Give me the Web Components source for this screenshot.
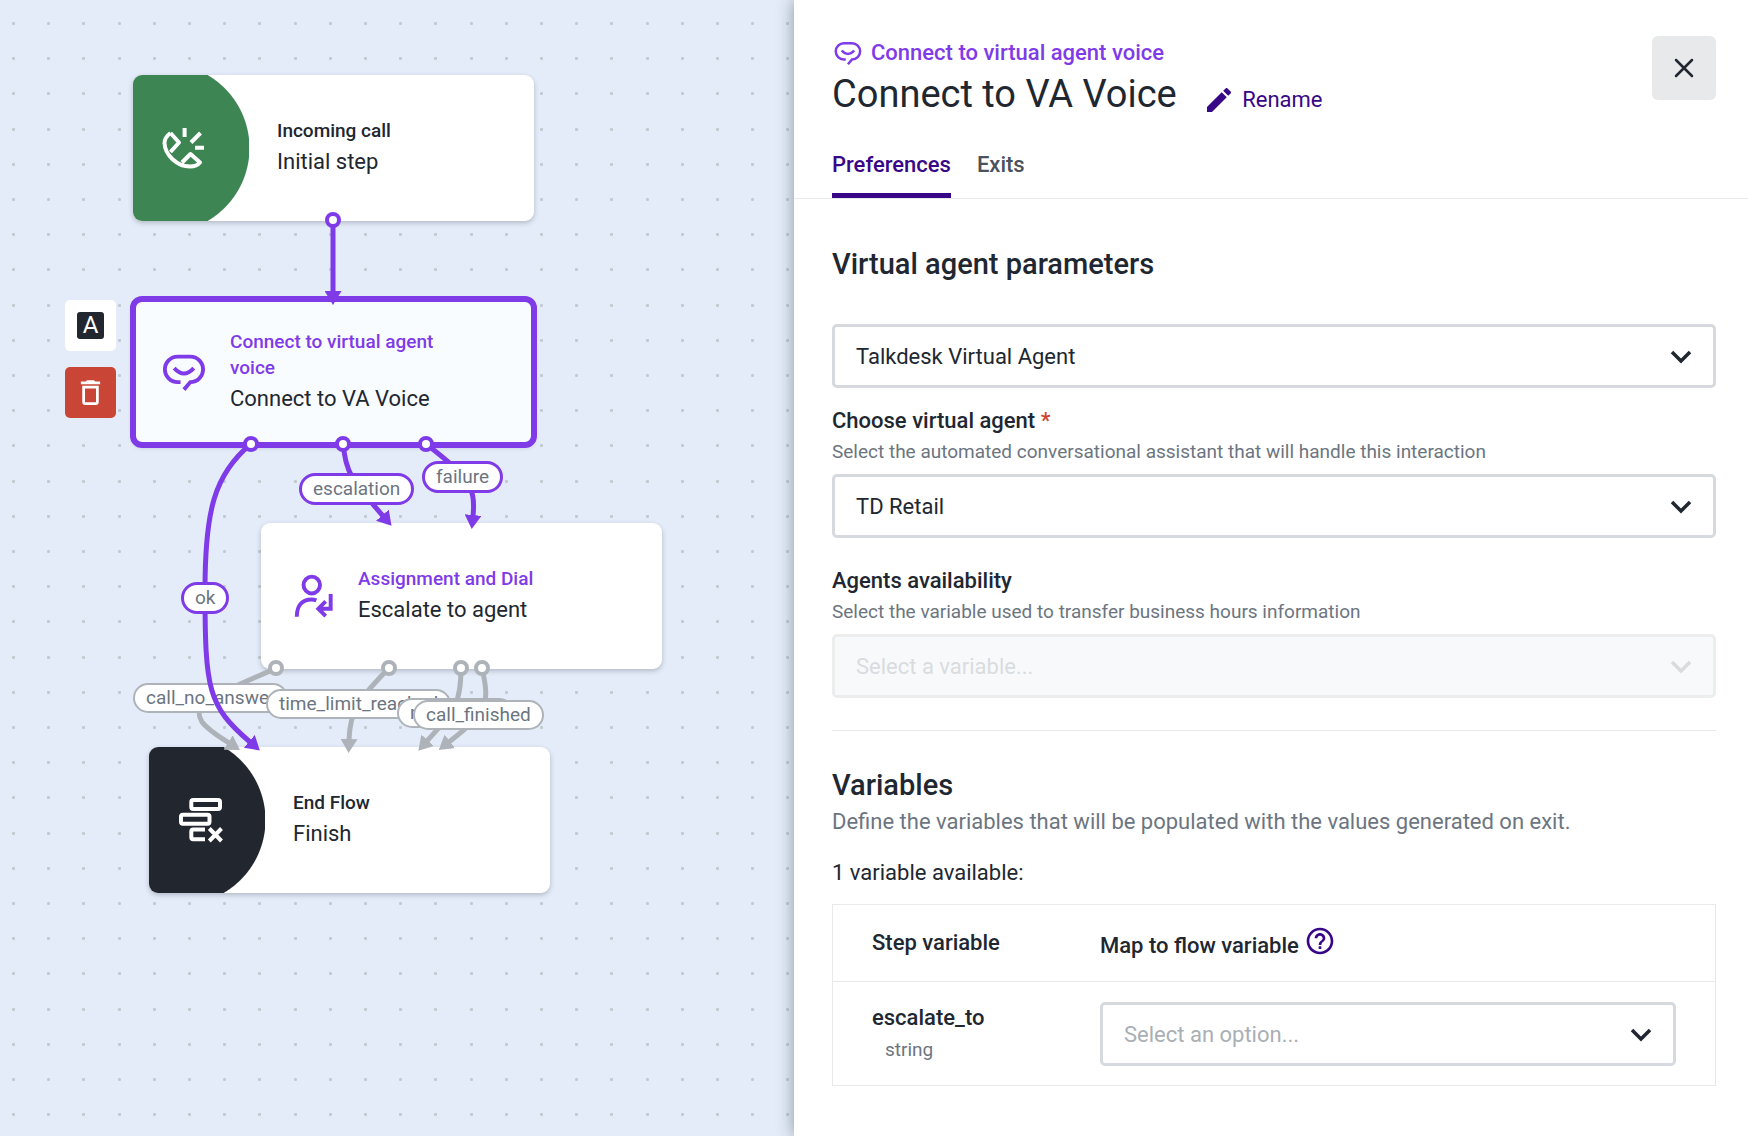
<!DOCTYPE html>
<html lang="en">
<head>
<meta charset="utf-8">
<meta name="viewport" content="width=device-width, initial-scale=1">
<title>Connect to VA Voice</title>
<style>
	body {
		margin: 0;
		font-family: Roboto, 'Open Sans', sans-serif;
		font-size: 22px;
		line-height: 32px;
		color: #212730;
		--violet: #7f3be8;
		--indigo: #380787;
		--muted: #6c757f;
		--line: #e7e9eb;
	}
</style>
</head>
<body>
<flow-editor>
	<flow-canvas slot="canvas">
		<flow-node kind="start" icon="phone" heading="Incoming call" style="left: 133px; top: 75px">Initial step</flow-node>
		<flow-node kind="selected" icon="agent" heading="Connect to virtual agent voice" style="left: 133px; top: 299px">Connect to VA Voice</flow-node>
		<flow-node kind="step" icon="assign" heading="Assignment and Dial" style="left: 261px; top: 523px">Escalate to agent</flow-node>
		<flow-node kind="end" icon="finish" heading="End Flow" style="left: 149px; top: 747px">Finish</flow-node>

		<flow-edge from="276,668" path="C262 675 248 680 236 686 C196 704 196 712 202 722 C208 730 218 736 229 743"></flow-edge>
		<flow-edge from="389,668" path="C360 698 350 708 349 740"></flow-edge>
		<flow-edge from="461,668" path="C461 704 455 710 427 741"></flow-edge>
		<flow-edge from="482,668" path="C490 704 488 712 449 742"></flow-edge>
		<flow-label style="left: 133px; top: 683px">call_no_answer</flow-label>
		<flow-label style="left: 266px; top: 689px">time_limit_reached</flow-label>
		<flow-label style="left: 397px; top: 698px">no_answer</flow-label>
		<flow-label style="left: 413px; top: 700px">call_finished</flow-label>

		<flow-edge active from="333,220" path="V292"></flow-edge>
		<flow-edge active from="251,444" path="C214 474 205 512 205 590 C205 690 208 706 250 742"></flow-edge>
		<flow-edge active from="343,444" path="C347 474 350 478 383 516"></flow-edge>
		<flow-edge active from="426,444" path="C468 476 476 486 473 516"></flow-edge>
		<flow-label active style="left: 181px; top: 582px">ok</flow-label>
		<flow-label active style="left: 299px; top: 473px">escalation</flow-label>
		<flow-label active style="left: 422px; top: 461px">failure</flow-label>

		<node-actions style="left: 65px; top: 300px"></node-actions>
	</flow-canvas>

	<step-panel slot="panel" type="Connect to virtual agent voice" name="Connect to VA Voice">
		<panel-section heading="Virtual agent parameters">
			<select-field name="Provider" value="Talkdesk Virtual Agent"></select-field>
			<select-field label="Choose virtual agent" required hint="Select the automated conversational assistant that will handle this interaction" value="TD Retail"></select-field>
			<select-field label="Agents availability" hint="Select the variable used to transfer business hours information" placeholder="Select a variable..." disabled></select-field>
		</panel-section>
		<panel-section heading="Variables" hint="Define the variables that will be populated with the values generated on exit.">
			<variable-table variable="escalate_to" type="string"></variable-table>
		</panel-section>
	</step-panel>
</flow-editor>

<script>
// Dumb html template string function
const html = (strings, ...values) => {
	let str = '';
	strings.forEach((string, i) => {
		str += string + (values[i] || '');
	});
	return str;
};

const ICONS = {
	phone: html`<g fill="none" stroke="currentColor" stroke-width="4">
		<path stroke-linejoin="round" d="M11.500 9C7.500 12 5.500 15 5.500 19C6 31 18 42.500 31 42.500C35 42.500 39 41 41 38.500L31.500 30L23 38.500M11.500 9L20 18.500L11.500 28"/>
		<path d="M25.600 4V13M45 23.700H36M41.500 9L32 18.500"/>
	</g>`,
	agent: html`<path fill="none" stroke="currentColor" stroke-width="4" d="M22 34.300H19A13 13 0 0 1 19 8.300H32A13 13 0 0 1 32 34.300L25.500 42M15.500 20Q25.500 31 35.500 20"/>`,
	assign: html`<g fill="none" stroke="currentColor" stroke-width="4">
		<ellipse cx="25.300" cy="12.800" rx="8.400" ry="8.600"/>
		<path d="M10 45.300C10 33 16 27.500 25 27.500C27 27.500 28.500 27.800 30 28.400M44.600 22V37H33M39.500 29.500L32 37L39.500 44.500"/>
	</g>`,
	finish: html`<g fill="none" stroke="currentColor" stroke-width="4">
		<rect x="16.300" y="4" width="28.700" height="9" rx="2"/>
		<rect x="6" y="18.700" width="28.500" height="9" rx="2"/>
		<path d="M30 33.500H18.300a2 2 0 0 0-2 2v5.800a2 2 0 0 0 2 2H30M34.300 32.500L46.500 45M46.500 32.500L34.300 45"/>
	</g>`,
};

const icon = (name, size) => html`<svg width="${size}" height="${size}" viewBox="0 0 48 48" aria-hidden="true">${ICONS[name]}</svg>`;

const define = (tag, render) =>
	customElements.define(
		tag,
		class extends HTMLElement {
			constructor() {
				super();
				this.attachShadow({ mode: 'open' });
			}

			connectedCallback() {
				this.shadowRoot.innerHTML = render(this, name => this.getAttribute(name));
			}
		}
	);

// Canvas on the left, step settings on the right
define('flow-editor', () => html`
	<style>
		:host {
			display: grid;
			grid-template-columns: 397fr 477fr;
			min-height: 100vh;
		}
	</style>
	<slot name="canvas"></slot>
	<slot name="panel"></slot>
`);

define('flow-canvas', () => html`
	<style>
		:host {
			display: block;
			position: relative;
			overflow: hidden;
			background: #e4ecf9;
		}

		.dots {
			position: absolute;
			width: 100%;
			height: 100%;
		}
	</style>
	<svg class="dots" aria-hidden="true">
		<defs>
			<pattern id="row" x="12" width="176" height="176" patternUnits="userSpaceOnUse">
				<g id="line" fill="#c3cbd1">
					<rect width="3" height="3" rx="1"/>
					<rect x="35" width="3" height="3" rx="1"/>
					<rect x="70" width="3" height="3" rx="1"/>
					<rect x="106" width="3" height="3" rx="1"/>
					<rect x="141" width="3" height="3" rx="1"/>
				</g>
				<use href="#line" y="35"/>
				<use href="#line" y="70"/>
				<use href="#line" y="106"/>
				<use href="#line" y="141"/>
			</pattern>
			<pattern id="dots" href="#row" y="22"/>
		</defs>
		<rect width="100%" height="100%" fill="url(#dots)"/>
	</svg>
	<slot></slot>
`);

define('flow-node', (el, attr) => html`
	<style>
		:host {
			position: absolute;
			display: grid;
			grid-template-columns: 73px 1fr;
			column-gap: 24px;
			align-items: center;
			box-sizing: border-box;
			width: 401px;
			height: 146px;
			padding-right: 72px;
			border-radius: 9px;
			overflow: hidden;
			background: #fff;
			box-shadow: 0 2px 5px rgba(33, 39, 48, 0.25);
		}

		:host([kind='selected']) {
			background: #f9fcff;
			outline: 6px solid var(--violet);
			outline-offset: -3px;
		}

		:host([kind='start']),
		:host([kind='end']) {
			grid-template-columns: 116px 1fr;
			column-gap: 28px;
			color: #212730;
			--shape: #3d8654;
		}

		:host([kind='end']) {
			--shape: #22272f;
		}

		.icon {
			display: flex;
			align-items: center;
			height: 146px;
			padding-left: 26px;
			color: var(--violet);
		}

		:host([kind='start']) .icon,
		:host([kind='end']) .icon {
			color: #fff;
			background: radial-gradient(circle at 32px 50%, var(--shape) 84px, transparent 85px);
		}

		h3 {
			margin: 0 0 2px;
			font-size: 19px;
			line-height: 26px;
			font-weight: 500;
			color: var(--violet);
		}

		:host([kind='start']) h3,
		:host([kind='end']) h3 {
			color: inherit;
		}

		p {
			margin: 0;
		}
	</style>
	<div class="icon">${icon(attr('icon'), 48)}</div>
	<div>
		<h3>${attr('heading')}</h3>
		<p><slot></slot></p>
	</div>
`);

// Connection line: port at the start, arrow head at the end
define('flow-edge', (el, attr) => {
	const [x, y] = attr('from').split(',');
	return html`
		<style>
			:host {
				position: absolute;
				inset: 0;
				pointer-events: none;
				color: #adb3b8;
			}

			:host([active]) {
				color: var(--violet);
			}

			svg {
				display: block;
				width: 100%;
				height: 100%;
			}
		</style>
		<svg aria-hidden="true">
			<marker id="arrow" markerUnits="userSpaceOnUse" markerWidth="14" markerHeight="17" refX="1" refY="8.500" orient="auto">
				<path d="M0 0L14 8.500L0 17Z" fill="currentColor"/>
			</marker>
			<path d="M${x} ${y}${attr('path')}" fill="none" stroke="currentColor" stroke-width="5" marker-end="url(#arrow)"/>
			<circle cx="${x}" cy="${y}" r="6" fill="#fff" stroke="currentColor" stroke-width="4"/>
		</svg>
	`;
});

define('flow-label', () => html`
	<style>
		:host {
			position: absolute;
			padding: 0 11px;
			border: 2px solid #adb3b8;
			border-radius: 16px;
			background: #fff;
			color: var(--muted);
			font-size: 19px;
			line-height: 26px;
			white-space: nowrap;
		}

		:host([active]) {
			border: 3px solid var(--violet);
		}
	</style>
	<slot></slot>
`);

define('node-actions', () => html`
	<style>
		:host {
			position: absolute;
			display: grid;
			gap: 16px;
		}

		button {
			display: grid;
			place-items: center;
			width: 51px;
			height: 51px;
			padding: 0;
			border: 0;
			border-radius: 5px;
			background: #fff;
			color: #fff;
			font: inherit;
		}

		.delete {
			background: #c94636;
		}

		span {
			width: 27px;
			border-radius: 3px;
			background: #22272f;
			font-size: 24px;
			line-height: 27px;
		}
	</style>
	<button aria-label="Annotate step"><span>A</span></button>
	<button class="delete" aria-label="Delete step">
		<svg width="33" height="33" viewBox="0 0 24 24" fill="currentColor">
			<path d="M6 19c0 1.100.9 2 2 2h8c1.100 0 2-.9 2-2V7H6v12zM8 9h8v10H8V9zm7.500-5l-1-1h-5l-1 1H5v2h14V4z"/>
		</svg>
	</button>
`);

define('step-panel', (el, attr) => html`
	<style>
		:host {
			display: block;
			position: relative;
			background: #fff;
			box-shadow: 0 0 16px rgba(33, 39, 60, 0.45);
		}

		header {
			display: flex;
			align-items: flex-start;
			justify-content: space-between;
			padding: 36px 32px 0 38px;
		}

		.type {
			display: flex;
			align-items: center;
			gap: 9px;
			line-height: 34px;
			color: var(--violet);
			font-weight: 500;
		}

		.name {
			display: flex;
			align-items: baseline;
			gap: 26px;
		}

		h1 {
			margin: 0;
			font-size: 38px;
			line-height: 48px;
			font-weight: 400;
		}

		button {
			border: 0;
			padding: 0;
			background: none;
			font: inherit;
			color: var(--indigo);
		}

		.rename svg {
			margin-right: 2px;
			vertical-align: -9px;
		}

		.close {
			display: grid;
			place-items: center;
			width: 64px;
			height: 64px;
			border-radius: 6px;
			background: #e7e9ea;
			color: #212730;
		}

		nav {
			display: flex;
			gap: 26px;
			margin-top: 31px;
			padding-left: 38px;
			border-bottom: 1px solid var(--line);
		}

		nav button {
			padding-bottom: 12px;
			border-bottom: 5px solid transparent;
			font-weight: 500;
			color: #4a525c;
		}

		nav [aria-selected='true'] {
			border-color: var(--indigo);
			color: var(--indigo);
		}

		main {
			padding: 0 32px 48px 38px;
		}
	</style>
	<header>
		<div>
			<div class="type">${icon('agent', 30)}${attr('type')}</div>
			<div class="name">
				<h1>${attr('name')}</h1>
				<button class="rename">
					<svg width="32" height="32" viewBox="0 0 24 24" fill="currentColor" aria-hidden="true">
						<path d="M3 17.250V21h3.750L17.810 9.940l-3.750-3.750L3 17.250zM20.710 7.040c.39-.39.39-1.020 0-1.410l-2.340-2.340c-.39-.39-1.020-.39-1.410 0l-1.830 1.830 3.750 3.750 1.830-1.830z"/>
					</svg>
					Rename
				</button>
			</div>
		</div>
		<button class="close" aria-label="Close">
			<svg width="24" height="24" viewBox="0 0 24 24" fill="none" stroke="currentColor" stroke-width="2.500" stroke-linecap="round">
				<path d="M4 4L20 20M20 4L4 20"/>
			</svg>
		</button>
	</header>
	<nav role="tablist">
		<button role="tab" aria-selected="true">Preferences</button>
		<button role="tab" aria-selected="false">Exits</button>
	</nav>
	<main><slot></slot></main>
`);

define('panel-section', (el, attr) => html`
	<style>
		:host {
			display: block;
			padding-top: 46px;
		}

		:host(:not(:first-child)) {
			margin-top: 32px;
			border-top: 1px solid var(--line);
			padding-top: 35px;
		}

		h2 {
			margin: 0;
			font-size: 29px;
			line-height: 38px;
			font-weight: 500;
		}

		p {
			margin: 2px 0 0;
			color: var(--muted);
		}
	</style>
	<h2>${attr('heading')}</h2>
	${attr('hint') && html`<p>${attr('hint')}</p>`}
	<slot></slot>
`);

define('select-field', (el, attr) => html`
	<style>
		:host {
			display: block;
		}

		:host([name='Provider']) {
			margin-top: 41px;
		}

		:host([label]) {
			margin-top: 27px;
		}

		:host([required]) {
			margin-top: 17px;
		}

		label {
			display: block;
			font-weight: 500;
		}

		label span {
			color: #d0432f;
		}

		p {
			margin: 0 0 7px;
			font-size: 19px;
			line-height: 30px;
			color: var(--muted);
		}

		.control {
			display: grid;
			align-items: center;
		}

		select,
		svg {
			grid-area: 1 / 1;
		}

		select {
			appearance: none;
			width: 100%;
			height: 64px;
			padding: 2px 64px 0 21px;
			border: 3px solid #d6dade;
			border-radius: 5px;
			background: #fff;
			font: inherit;
			color: #212730;
		}

		:host([placeholder]) select {
			color: #a9afb5;
		}

		:host([disabled]) select {
			border-color: #eceeee;
			background: #f8f9fb;
			color: #d9dcdf;
			opacity: 1;
		}

		svg {
			justify-self: end;
			margin-right: 24px;
			color: #212730;
			pointer-events: none;
		}

		:host([disabled]) svg {
			color: #d9dcdf;
		}
	</style>
	${attr('label') && html`<label for="select">${attr('label')}${el.hasAttribute('required') && ' <span>*</span>'}</label>`}
	${attr('hint') && html`<p id="hint">${attr('hint')}</p>`}
	<div class="control">
		<select id="select" ${attr('name') && `aria-label="${attr('name')}"`} ${attr('hint') && 'aria-describedby="hint"'} ${el.hasAttribute('disabled') && 'disabled'}>
			<option>${attr('value') || attr('placeholder')}</option>
		</select>
		<svg width="22" height="16" viewBox="0 0 22 16" fill="none" stroke="currentColor" stroke-width="3.500" aria-hidden="true">
			<path d="M2 4L11 13L20 4"/>
		</svg>
	</div>
`);

define('variable-table', (el, attr) => html`
	<style>
		:host {
			display: block;
			margin-top: 19px;
		}

		table {
			width: 100%;
			border-collapse: collapse;
			border: 1px solid var(--line);
		}

		caption {
			margin-bottom: 15px;
			text-align: left;
		}

		tbody {
			border-top: 1px solid var(--line);
		}

		th {
			height: 76px;
			padding: 0;
			font-weight: 500;
			text-align: left;
		}

		tbody th,
		td {
			height: auto;
			padding: 20px 0 19px;
			vertical-align: top;
		}

		td {
			padding-right: 39px;
		}

		th:first-child {
			width: 228px;
			padding-left: 39px;
		}

		small {
			display: block;
			padding-left: 13px;
			font-size: 19px;
			font-weight: 400;
			color: var(--muted);
		}

		button {
			display: inline-block;
			padding: 0;
			border: 0;
			background: none;
			color: var(--indigo);
			line-height: 0;
			vertical-align: -4px;
		}
	</style>
	<table>
		<caption>1 variable available:</caption>
		<thead>
			<tr>
				<th>Step variable</th>
				<th>
					Map to flow variable
					<button aria-label="Help">
						<svg width="32" height="32" viewBox="0 0 24 24" fill="currentColor">
							<path d="M11 18h2v-2h-2v2zm1-16C6.480 2 2 6.480 2 12s4.480 10 10 10 10-4.480 10-10S17.520 2 12 2zm0 18c-4.410 0-8-3.590-8-8s3.590-8 8-8 8 3.590 8 8-3.590 8-8 8zm0-14c-2.210 0-4 1.790-4 4h2c0-1.100.9-2 2-2s2 .9 2 2c0 2-3 1.750-3 5h2c0-2.250 3-2.500 3-5 0-2.210-1.790-4-4-4z"/>
						</svg>
					</button>
				</th>
			</tr>
		</thead>
		<tbody>
			<tr>
				<th>${attr('variable')}<small>${attr('type')}</small></th>
				<td><select-field name="Map to flow variable" placeholder="Select an option..."></select-field></td>
			</tr>
		</tbody>
	</table>
`);
</script>
</body>
</html>
